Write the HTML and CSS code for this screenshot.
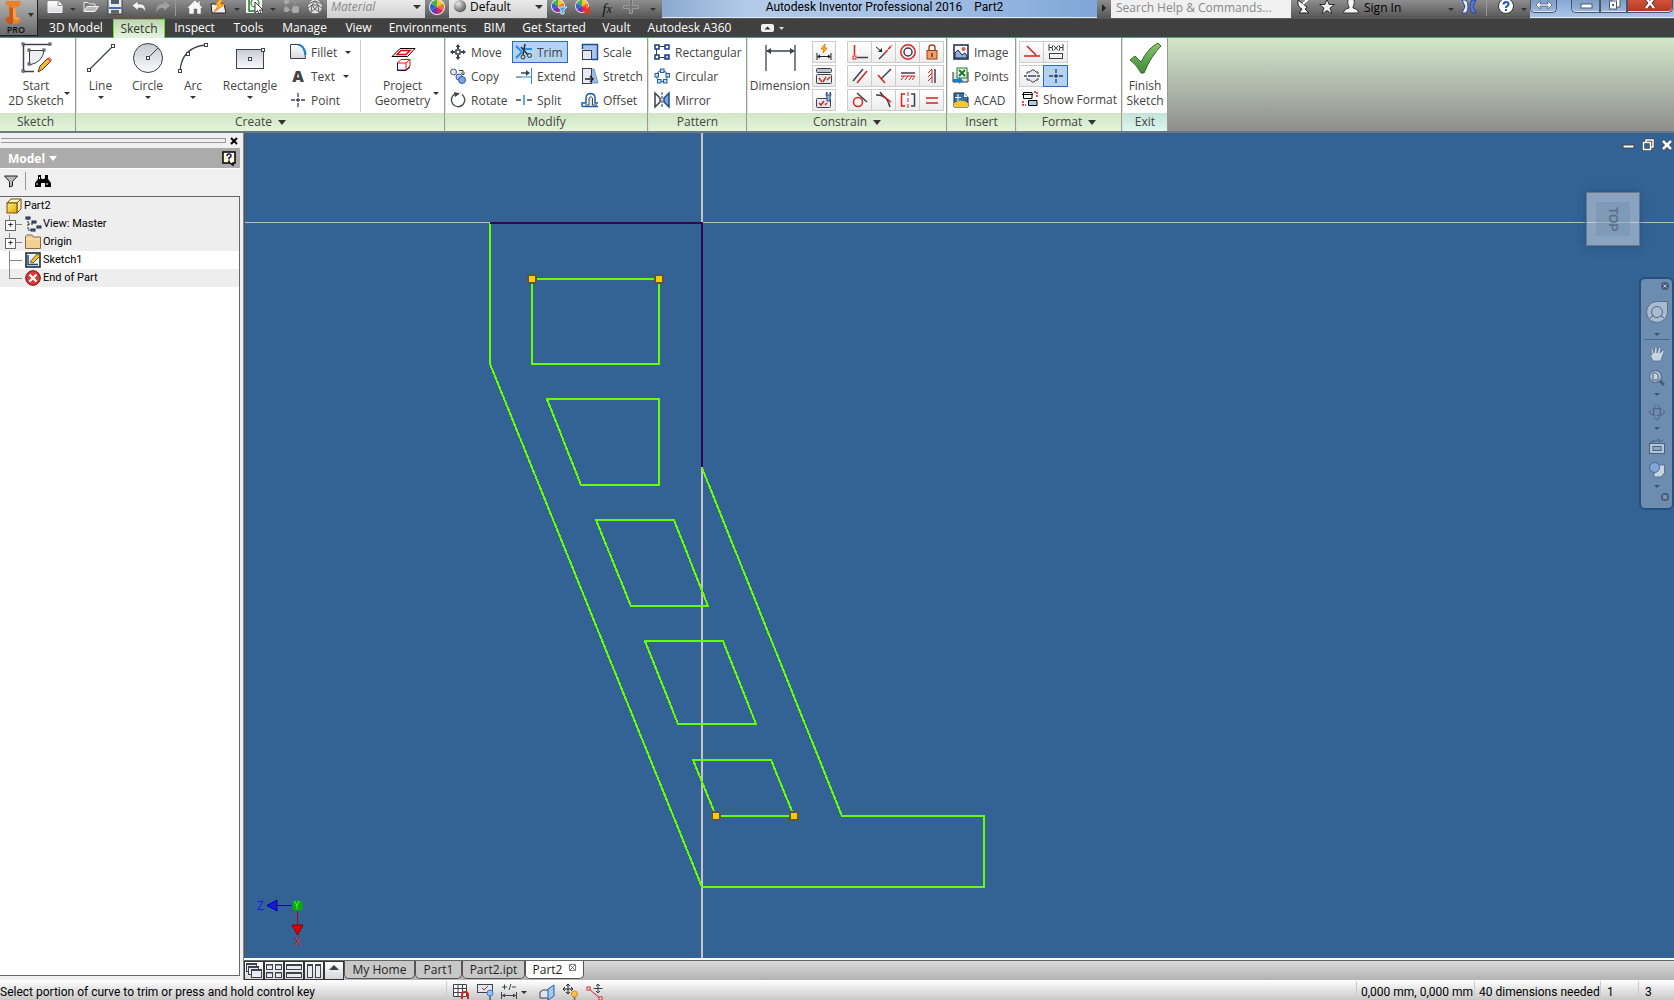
FILE: index.html
```html
<!DOCTYPE html>
<html lang="en">
<head>
<meta charset="utf-8">
<title>Autodesk Inventor Professional 2016 - Part2</title>
<link rel="stylesheet" href="styles.css">
</head>
<body>
<svg class="defs" aria-hidden="true">
  <defs>
    <linearGradient id="steel" x1="0" y1="0" x2="0" y2="1"><stop offset="0" stop-color="#c6cad2"/><stop offset="1" stop-color="#fbfbfc"/></linearGradient>
    <linearGradient id="paper" x1="0" y1="0" x2="0" y2="1"><stop offset="0" stop-color="#ffffff"/><stop offset="1" stop-color="#d4d8de"/></linearGradient>
    <linearGradient id="leaf" x1="0" y1="0" x2="0" y2="1"><stop offset="0" stop-color="#8fc46e"/><stop offset="1" stop-color="#3d8a35"/></linearGradient>
    <linearGradient id="gold" x1="0" y1="0" x2="1" y2="1"><stop offset="0" stop-color="#fff27a"/><stop offset="1" stop-color="#e0a800"/></linearGradient>
    <radialGradient id="ball" cx=".35" cy=".3" r=".8"><stop offset="0" stop-color="#e8e8e8"/><stop offset="1" stop-color="#4c4c4c"/></radialGradient>
    <symbol id="wheel" viewBox="0 0 16 16">
      <circle cx="8" cy="8" r="8" fill="#e9e9ee"/>
      <path d="M8 8V1A7 7 0 0 1 14 4.500Z" fill="#f6c62a"/><path d="M8 8L14 4.500A7 7 0 0 1 14 11.500Z" fill="#f0702a"/>
      <path d="M8 8L14 11.500A7 7 0 0 1 8 15Z" fill="#d8285a"/><path d="M8 8V15A7 7 0 0 1 2 11.500Z" fill="#6a35b8"/>
      <path d="M8 8L2 11.500A7 7 0 0 1 2 4.500Z" fill="#2a62d8"/><path d="M8 8L2 4.500A7 7 0 0 1 8 1Z" fill="#46b048"/>
    </symbol>
  </defs>
</svg>

<header class="titlebar">
  <button class="tool" aria-label="New"><svg viewBox="0 0 16 16"><path d="M1 2.500H11.500L15 6V13.500H1Z" fill="url(#paper)" stroke="#f4f4f4"/><path d="M11 2.500V6.500H15" fill="none" stroke="#888"/></svg></button>
  <button class="drop" aria-label="New options"></button>
  <button class="tool" aria-label="Open"><svg viewBox="0 0 16 16"><path d="M1 12V3.500H5L6.500 5H12V7" fill="#777" stroke="#e8e8e8"/><path d="M1 12.500L4 7.500H15.500L12 12.500Z" fill="#bbb" stroke="#f4f4f4"/></svg></button>
  <button class="tool" aria-label="Save"><svg viewBox="0 0 16 16"><rect x="1" y="0" width="14" height="15" fill="#e6e9ee" stroke="#3b3f47"/><rect x="4" y="0" width="8" height="5" fill="#555b66"/><rect x="2" y="8" width="12" height="2" fill="#3b6db0"/><rect x="4" y="11" width="8" height="4" fill="#666"/></svg></button>
  <button class="tool" aria-label="Undo"><svg viewBox="0 0 16 16"><path d="M1 6.500L7 2V5H10Q15 5.500 14.500 14Q13 9 10 9H7V11.500Z" fill="#f2f2f2" stroke="#555" stroke-width=".5"/></svg></button>
  <button class="tool" aria-label="Redo"><svg viewBox="0 0 16 16"><path d="M15 6.500L9 2V5H6Q1 5.500 1.500 14Q3 9 6 9H9V11.500Z" fill="#a0a0a0"/></svg></button>
  <span class="rule"></span>
  <button class="tool" aria-label="Home"><svg viewBox="0 0 16 16"><path d="M8 1L0 9H2V15H7V10H10V15H14V9H16L13 6V2H11V4Z" fill="#f6f6f6" stroke="#666" stroke-width=".5"/></svg></button>
  <button class="tool" aria-label="Update"><svg viewBox="0 0 16 16"><path d="M0 5H13L15 14H1Z" fill="#eee" stroke="#222"/><path d="M11 -2L4 6H8L3 13L14 5H9L13 -2Z" fill="#ffc93c" stroke="#e8760c"/></svg></button>
  <button class="drop" aria-label="Update options"></button>
  <button class="tool" aria-label="Select"><svg viewBox="0 0 16 16"><path d="M-1 -1H15V14H-1Z" fill="#f4f8f4"/><path d="M2 1V12H13" fill="none" stroke="#177e23" stroke-width="1.500"/><circle cx="8" cy="4" r="4" fill="none" stroke="#5c9c5c" stroke-width="1.500"/><path d="M8 3V14L10.500 11.500L12 15L14 14L12.500 11H16Z" fill="#fff" stroke="#333"/></svg></button>
  <button class="drop" aria-label="Select options"></button>
  <button class="tool" aria-label="Relationships"><svg viewBox="0 0 16 16" fill="#aaa"><rect x="1" y="0" width="5" height="5" rx="2"/><rect x="1" y="8" width="5" height="5" rx="2"/><rect x="9" y="7" width="7" height="7" rx="2"/><path d="M7 2H12V6M3 6V8M6 11H9" fill="none" stroke="#999"/></svg></button>
  <button class="tool" aria-label="Adjust material"><svg viewBox="0 0 16 16"><circle cx="8" cy="7.500" r="7.500" fill="#ddd" stroke="#666"/><path d="M1 5L8 2L15 5M1 9L5 6L11 6L15 9M4 13L5 6L8 2L11 6L12 13L8 10ZM5 6L8 10L11 6" fill="none" stroke="#666"/></svg></button>
  <span class="pick material"><select aria-label="Material"><option>Material</option></select></span>
  <button class="tool" aria-label="Appearance"><svg viewBox="0 0 16 16"><use href="#wheel"/></svg></button>
  <span class="pick look"><svg viewBox="0 0 16 16"><circle cx="8" cy="7" r="7" fill="url(#ball)"/></svg><select aria-label="Appearance style"><option>Default</option></select></span>
  <button class="tool" aria-label="Adjust appearance"><svg viewBox="0 0 16 16"><use href="#wheel" width="14" height="14"/><path d="M7 8H16L13 11V15H10V11Z" fill="#35b6e6" stroke="#fff" stroke-width=".7"/></svg></button>
  <button class="tool" aria-label="Clear appearance"><svg viewBox="0 0 16 16"><use href="#wheel" width="14" height="14"/><path d="M9 8L15 15M15 8L9 15" stroke="#e8361e" stroke-width="2"/></svg></button>
  <button class="tool fx" aria-label="Parameters">f<span>x</span></button>
  <button class="tool" aria-label="Add"><svg viewBox="0 0 16 16"><path d="M6.500 .5H9.500V6.500H15.500V9.500H9.500V14.500H6.500V9.500H.5V6.500H6.500Z" fill="#777" stroke="#999"/></svg></button>
  <button class="drop wide" aria-label="Customize toolbar"></button>
  <h1 class="caption"><span>Autodesk Inventor Professional 2016</span><span>Part2</span></h1>
  <button class="expand" aria-label="Collapse search"></button>
  <input class="search" type="text" aria-label="Search" placeholder="Search Help &amp; Commands...">
  <button class="tool" aria-label="Communication center"><svg viewBox="0 0 16 16"><path d="M3 1Q2 8 7 10L4 14H14L10 10Q12 9 12 8Z" fill="#f4f4f4" stroke="#222"/><path d="M8 5L13 0" stroke="#fff" stroke-width="2"/></svg></button>
  <button class="tool" aria-label="Favorites"><svg viewBox="0 0 16 16"><path d="M8 0L10 5.500H15.500L11 9L13 15L8 11.500L3 15L5 9L.5 5.500H6Z" fill="#f4f4f4" stroke="#333"/></svg></button>
  <button class="tool" aria-label="Account"><svg viewBox="0 0 16 16"><path d="M8 -1C4 -1 4 4 6 8V9Q1 10 .5 14H15.500Q15 10 10 9V8C12 4 12 -1 8 -1Z" fill="#f4f4f4" stroke="#333"/></svg></button>
  <button class="signin">Sign In</button>
  <button class="drop" aria-label="Sign in options"></button>
  <button class="tool" aria-label="Exchange apps"><svg viewBox="0 0 16 16"><path d="M1 1H5Q7 3 7 7.500Q7 12 5 14H1L4 7.500Z" fill="#e8ecfa" stroke="#29449c"/><path d="M15 1H11Q9 3 9 7.500Q9 12 11 14H15L12 7.500Z" fill="#5679d6" stroke="#29449c"/></svg></button>
  <span class="rule far"></span>
  <button class="tool" aria-label="Help"><svg viewBox="0 0 16 16"><circle cx="8" cy="7" r="7.500" fill="#fff" stroke="#333"/><path d="M5.500 5.500Q5.500 3 8 3Q10.500 3 10.500 5.200Q10.500 6.600 8 8V9" fill="none" stroke="#1f56c0" stroke-width="2"/><rect x="7" y="10" width="2" height="2" fill="#1f56c0"/></svg></button>
  <button class="drop" aria-label="Help options"></button>
  <div class="winbar">
    <button class="win resize" aria-label="Resize"><svg viewBox="0 0 18 12"><path d="M1 5L5 1V4H13V1L17 5L13 9V6H5V9Z" fill="#fff" stroke="#4c5a70" stroke-width=".7"/></svg></button>
    <button class="win min" aria-label="Minimize"><svg viewBox="0 0 18 12"><rect x="4" y="4" width="11" height="4" fill="#fff" stroke="#4c5a70"/></svg></button>
    <button class="win max" aria-label="Restore"><svg viewBox="0 0 18 12"><rect x="7" y="-2" width="8" height="9" fill="#fff" stroke="#4c5a70"/><rect x="4.500" y="1" width="7" height="8" fill="#fff" stroke="#4c5a70"/><rect x="7" y="4" width="2" height="2" fill="#4c5a70"/></svg></button>
    <button class="win close" aria-label="Close"><svg viewBox="0 0 18 12"><path d="M5 -2L13 8M13 -2L5 8" stroke="#4a2020" stroke-width="4"/><path d="M5 -2L13 8M13 -2L5 8" stroke="#fff" stroke-width="2.500"/></svg></button>
  </div>
</header>

<button class="appmenu" aria-label="Application menu">
  <svg viewBox="0 0 26 26"><path d="M5 0H21V5L16 7V17L21 19V23L16 25H9L5 22V18L9 17V6L5 4Z" fill="#e8812a"/><path d="M9 6L13 8V25H9L5 22V18L9 17Z" fill="#c4591a"/><path d="M13 8L16 7V17L21 19L16 21L13 18Z" fill="#f6a04a"/></svg>
  <span>PRO</span>
</button>

<nav class="tabs">
  <a href="#model">3D Model</a><a href="#sketch" class="on">Sketch</a><a href="#inspect">Inspect</a><a href="#tools">Tools</a><a href="#manage">Manage</a><a href="#view">View</a><a href="#env">Environments</a><a href="#bim">BIM</a><a href="#start">Get Started</a><a href="#vault">Vault</a><a href="#a360">Autodesk A360</a>
  <button class="fold" aria-label="Minimize ribbon"><svg viewBox="0 0 26 8"><rect width="13" height="8" rx="2" fill="#f0f0f0"/><path d="M3.500 5.500L6.500 2.500L9.500 5.500Z" fill="#333"/><path d="M18 3H23L20.500 6Z" fill="#ddd"/></svg></button>
</nav>

<section class="ribbon">
  <div class="panel p-sketch">
    <div class="body">
      <button class="big side"><svg viewBox="0 0 32 32"><g fill="none" stroke="#3c424c"><path d="M3.500 30.500V2.500H30.500M3.500 29.500H14" stroke-width="1.500"/><path d="M9.500 8.500H24Q23 20 9.500 23Z" fill="#eceef2"/></g><g fill="#fff" stroke="#3c424c"><rect x="2" y="1" width="2" height="2"/><rect x="29" y="1" width="2" height="2"/><rect x="2" y="28" width="2" height="2"/><rect x="8" y="7" width="2" height="2"/><rect x="23" y="7" width="2" height="2"/><rect x="8" y="21" width="2" height="2"/></g><path d="M18 30L20 24L28 16L31 19L23 27Z" fill="#f4b63c" stroke="#5a3a10"/><path d="M27 17L29 15L32 18L30 20Z" fill="#e0604c"/></svg><span>Start<br>2D Sketch</span></button>
    </div>
    <h2>Sketch</h2>
  </div>

  <div class="panel p-create">
    <div class="body">
      <button class="big"><svg viewBox="0 0 32 32"><path d="M4 28L28 4" stroke="#3c424c" stroke-width="1.300"/><g fill="#fff" stroke="#3c424c"><rect x="2.500" y="26.500" width="3" height="3"/><rect x="26.500" y="2.500" width="3" height="3"/></g></svg><span>Line</span></button>
      <button class="big"><svg viewBox="0 0 32 32"><circle cx="16" cy="16" r="14.500" fill="url(#steel)" stroke="#3c424c"/><path d="M16 16L26 6" stroke="#3c424c"/><rect x="14.500" y="14.500" width="3" height="3" fill="#fff" stroke="#3c424c"/></svg><span>Circle</span></button>
      <button class="big"><svg viewBox="0 0 32 32"><path d="M3 29Q5 5 29 3" fill="none" stroke="#3c424c" stroke-width="1.300"/><g fill="#fff" stroke="#3c424c"><rect x="1.500" y="27.500" width="3" height="3"/><rect x="9.500" y="10.500" width="3" height="3"/><rect x="27.500" y="1.500" width="3" height="3"/></g></svg><span>Arc</span></button>
      <button class="big"><svg viewBox="0 0 32 32"><rect x="2.500" y="7.500" width="27" height="19" fill="url(#steel)" stroke="#3c424c"/><g fill="#fff" stroke="#3c424c"><rect x="14.500" y="15.500" width="3" height="3"/><rect x="27.500" y="6.500" width="3" height="3"/></g></svg><span>Rectangle</span></button>
      <div class="stack">
        <button class="small more"><svg viewBox="0 0 16 16"><path d="M.5 .5H8Q15 2 15.500 14.500H.5Z" fill="url(#paper)" stroke="#3c424c"/><path d="M8 .5Q15 2 15.500 11" fill="none" stroke="#1a7fd8" stroke-width="2"/></svg>Fillet</button>
        <button class="small more"><b class="glyph">A</b>Text</button>
        <button class="small"><svg viewBox="0 0 16 16"><path d="M1 8H5M6 8H10M11 8H15M8 1V5M8 6V10M8 11V15" stroke="#3c424c" stroke-width="1.300"/></svg>Point</button>
      </div>
      <button class="big side split"><svg viewBox="0 0 32 32"><path d="M13 6.500H28L20.500 14.500H5Z" fill="#fdf3ee" stroke="#000"/><path d="M14 8.500H23L19 12.500H10Z" fill="none" stroke="#e01010" stroke-width="1.500"/><path d="M10.500 21H19V28H10.500ZM10.500 21L14 17.500H23L19 21M23 17.500V24L19 28" fill="#fff" stroke="#e01010"/><path d="M10.500 21V28.500H19L23 25" fill="none" stroke="#101060"/></svg><span>Project<br>Geometry</span></button>
    </div>
    <h2 class="more">Create</h2>
  </div>

  <div class="panel p-modify">
    <div class="body">
      <div class="stack">
        <button class="small"><svg viewBox="0 0 16 16"><rect x="6" y="6" width="4" height="4" fill="none" stroke="#3c424c" stroke-width="1.500"/><path d="M8 0L10.500 3H9V5H7V3H5.500ZM8 16L5.500 13H7V11H9V13H10.500ZM0 8L3 5.500V7H5V9H3V10.500ZM16 8L13 10.500V9H11V7H13V5.500Z" fill="#3c424c"/></svg>Move</button>
        <button class="small"><svg viewBox="0 0 16 16"><circle cx="3.500" cy="4" r="3" fill="#dfe6f2" stroke="#4a5a78"/><circle cx="9" cy="9" r="3" fill="#b6cdf0" stroke="#2c5aa8"/><circle cx="12" cy="12" r="3.500" fill="#7ba4e4" stroke="#2c5aa8"/><path d="M9 2.500H13V5.500M11 4.500L13 7L15 4.500" fill="none" stroke="#333"/></svg>Copy</button>
        <button class="small"><svg viewBox="0 0 16 16"><path d="M12 2.500A6.700 6.700 0 1 1 5 2" fill="none" stroke="#4c525c" stroke-width="1.500"/><path d="M4 0L10 1.500L5 5Z" fill="#3c424c"/></svg>Rotate</button>
      </div>
      <div class="stack">
        <button class="small on"><svg viewBox="0 0 16 16"><path d="M0 2L6 8M0 14L6 8M8 5H16" stroke="#2090e8" stroke-width="2"/><path d="M5 3L12 11M9 0L7 11" stroke="#2c323c" stroke-width="1.500"/><circle cx="7" cy="13" r="2" fill="none" stroke="#2c323c"/><circle cx="13.500" cy="11.500" r="2" fill="none" stroke="#2c323c"/></svg>Trim</button>
        <button class="small"><svg viewBox="0 0 16 16"><path d="M0 9H5" stroke="#3c424c"/><path d="M5 9H15" stroke="#2090e8"/><path d="M15.500 0V16" stroke="#2090e8"/><path d="M5 5H12" stroke="#3c424c" stroke-width="1.500"/><path d="M10 2L14 5L10 8Z" fill="#3c424c"/></svg>Extend</button>
        <button class="small"><svg viewBox="0 0 16 16"><path d="M0 8H5M11 8H16" stroke="#3c424c" stroke-width="1.500"/><path d="M8 3V13" stroke="#2090e8" stroke-width="1.500"/></svg>Split</button>
      </div>
      <div class="stack">
        <button class="small"><svg viewBox="0 0 16 16"><path d="M.5 5V.5H15.500V15.500H10" fill="#a9c4ee" stroke="#1d4c8f" stroke-width="1.500"/><rect x=".5" y="6.500" width="9" height="9" fill="#e6eaf0" stroke="#3c424c"/></svg>Scale</button>
        <button class="small"><svg viewBox="0 0 16 16"><path d="M8 1H12L16 15H9Z" fill="#9dbbe8" stroke="#4c78b8" stroke-width=".7"/><rect x=".5" y=".5" width="9" height="15" fill="#e6eaf0" stroke="#3c424c"/><path d="M3 11H9M8 8L11 11L8 14" fill="none" stroke="#222" stroke-width="1.500"/></svg>Stretch</button>
        <button class="small"><svg viewBox="0 0 16 16"><path d="M0 14.500H16M0 14.500V11H4V6Q4 1.500 9 1.500Q13 2 13 6V11H16" fill="none" stroke="#1d5ea8" stroke-width="1.500"/><path d="M3 13H7V6Q9 3 10.500 6V13H15" fill="#dfe8f4" stroke="#3c424c"/></svg>Offset</button>
      </div>
    </div>
    <h2>Modify</h2>
  </div>

  <div class="panel p-pattern">
    <div class="body">
      <div class="stack">
        <button class="small"><svg viewBox="0 0 16 16"><path d="M2.500 5V11M5 2.500H11M5 13.500H11" stroke="#3c424c"/><g fill="#fff" stroke="#173a80" stroke-width="1.500"><rect x="1" y="1" width="4" height="4"/><rect x="11" y="1" width="4" height="4"/><rect x="1" y="11" width="4" height="4"/><rect x="11" y="11" width="4" height="4" fill="#a9c4ee"/></g></svg>Rectangular</button>
        <button class="small"><svg viewBox="0 0 16 16"><circle cx="8" cy="8" r="5.500" fill="none" stroke="#3c424c"/><g fill="#c4dcf4" stroke="#1d5ea8"><rect x="6.500" y="1" width="3.500" height="3.500"/><rect x="1" y="5.500" width="3.500" height="3.500"/><rect x="12" y="5.500" width="3.500" height="3.500"/><rect x="3.500" y="11.500" width="3.500" height="3.500"/><rect x="9.500" y="11.500" width="3.500" height="3.500"/></g></svg>Circular</button>
        <button class="small"><svg viewBox="0 0 16 16"><path d="M1 1V15L6 10V6Z" fill="#fff" stroke="#3c424c" stroke-width="1.500"/><path d="M15 1V15L10 10V6Z" fill="#7ba4e4" stroke="#1d4c8f" stroke-width="1.500"/><path d="M8 0V16" stroke="#333" stroke-dasharray="3 1"/></svg>Mirror</button>
      </div>
    </div>
    <h2>Pattern</h2>
  </div>

  <div class="panel p-constrain">
    <div class="body">
      <button class="big plain"><svg viewBox="0 0 32 32"><path d="M2 3V29M31 3V29M3 9H30" stroke="#3c424c" stroke-width="1.300"/><path d="M2 9L7 6V12ZM31 9L26 6V12Z" fill="#3c424c"/></svg><span>Dimension</span></button>
      <div class="cells one">
        <button aria-label="Automatic dimensions"><svg viewBox="0 0 16 16"><path d="M1 9V16M15 9V16M2 12.500H14" stroke="#222"/><path d="M1 12.500L4 10.500V14.500ZM15 12.500L12 10.500V14.500Z" fill="#222"/><path d="M9 0L5 5H8L7 9L11 4H8.500Z" fill="#ffc020" stroke="#e07a10"/></svg></button>
        <button aria-label="Show constraints"><svg viewBox="0 0 16 16"><rect x=".5" y=".5" width="15" height="4" rx="1" fill="#b8c2d0" stroke="#3c424c"/><rect x=".5" y="6.500" width="15" height="9" rx="1" fill="#e4e8ee" stroke="#3c424c"/><path d="M3 10L6 14M7 14L10 9M11 12L14 9" stroke="#c8381e" stroke-width="1.500"/></svg></button>
        <button aria-label="Constraint settings"><svg viewBox="0 0 16 16"><rect x=".5" y="6.500" width="14" height="9" rx="1" fill="#e4e8ee" stroke="#3c424c"/><path d="M3 11L5 13L8 9M9 13L11 11" fill="none" stroke="#d82020" stroke-width="1.500"/><path d="M11 9V5Q9 3 11 0V3H14V0Q16 3 14 5V9Z" fill="#9cc0e8" stroke="#284a78"/></svg></button>
      </div>
      <div class="cells four">
        <button aria-label="Coincident"><svg viewBox="0 0 16 16"><path d="M2.500 1V11" stroke="#d82020" stroke-width="1.500"/><rect x="1" y="12" width="3" height="3" fill="#fff" stroke="#d82020"/><path d="M5 13.500H16" stroke="#3c424c" stroke-width="1.500"/></svg></button>
        <button aria-label="Collinear"><svg viewBox="0 0 16 16"><path d="M3 15L9 9" stroke="#3c424c" stroke-width="1.500"/><path d="M9 9L16 1" stroke="#d82020" stroke-width="1.500" stroke-dasharray="4 1"/><path d="M0 3L5 7" stroke="#222"/><path d="M6 8V4L2 8Z" fill="#222"/></svg></button>
        <button aria-label="Concentric"><svg viewBox="0 0 16 16" fill="none" stroke-width="1.500"><circle cx="8" cy="8" r="7.200" stroke="#d82020"/><circle cx="8" cy="8" r="4" stroke="#3c424c"/></svg></button>
        <button aria-label="Fix"><svg viewBox="0 0 16 16"><path d="M5 7V3.500Q5 1 8 1Q11 1 11 3.500V7" fill="none" stroke="#a84a1c" stroke-width="1.500"/><rect x="3" y="6.500" width="10" height="8.500" fill="#f0a070" stroke="#9c4016"/><path d="M8 9V13" stroke="#7c2c0c" stroke-width="1.500"/></svg></button>
        <button aria-label="Parallel"><svg viewBox="0 0 16 16"><path d="M1 13L11 1" stroke="#3c424c" stroke-width="1.500"/><path d="M5 15L15 3" stroke="#d82020" stroke-width="1.500"/></svg></button>
        <button aria-label="Perpendicular"><svg viewBox="0 0 16 16"><path d="M5 11L15 1" stroke="#3c424c" stroke-width="1.500"/><path d="M2 7L9 15" stroke="#d82020" stroke-width="1.500"/></svg></button>
        <button aria-label="Horizontal"><svg viewBox="0 0 16 16"><path d="M1 5H15" stroke="#3c424c" stroke-width="1.500"/><path d="M1 8H15M4 8L1 12M8 8L5 12M12 8L9 12M15 8L12 12" stroke="#d82020"/></svg></button>
        <button aria-label="Vertical"><svg viewBox="0 0 16 16"><path d="M11 1V15" stroke="#3c424c" stroke-width="1.500"/><path d="M8 1V15M8 1L4 5M8 5L4 9M8 9L4 13" stroke="#d82020"/></svg></button>
        <button aria-label="Tangent"><svg viewBox="0 0 16 16"><circle cx="6" cy="10" r="4.500" fill="none" stroke="#d82020" stroke-width="1.500"/><path d="M5 1L15 10" stroke="#3c424c" stroke-width="1.500"/></svg></button>
        <button aria-label="Smooth"><svg viewBox="0 0 16 16"><path d="M0 3Q11 2 14 15M4 0L8 5" fill="none" stroke="#3c424c" stroke-width="1.500"/><path d="M6 3L15 10" fill="none" stroke="#d82020" stroke-width="1.500"/></svg></button>
        <button aria-label="Symmetric"><svg viewBox="0 0 16 16" fill="none"><path d="M5 2H1.500V14H5" stroke="#d82020" stroke-width="1.500"/><path d="M8 0V16" stroke="#d82020" stroke-dasharray="4 2"/><path d="M11 2H14.500V14H11" stroke="#3c424c" stroke-width="1.500"/></svg></button>
        <button aria-label="Equal"><svg viewBox="0 0 16 16"><path d="M2 6H14M2 11H14" stroke="#d82020" stroke-width="1.500"/></svg></button>
      </div>
    </div>
    <h2 class="more">Constrain</h2>
  </div>

  <div class="panel p-insert">
    <div class="body">
      <div class="stack">
        <button class="small"><svg viewBox="0 0 16 16"><rect x="1" y="1" width="14" height="14" fill="#f2f6fc" stroke="#182848" stroke-width="1.500"/><circle cx="10.500" cy="5" r="2" fill="#e0603c"/><path d="M2 9L5 6L9 11L12 9L14 12V14H2Z" fill="#8fb0d8" stroke="#182848"/></svg>Image</button>
        <button class="small"><svg viewBox="0 0 16 16"><path d="M0 4V14H15V4" fill="#dfe4ea" stroke="#333"/><rect x="4" y="0" width="10" height="10" fill="#eef7ea" stroke="#1e7a2a"/><path d="M6 2L12 8M12 2L6 8" stroke="#1e7a2a" stroke-width="2"/><path d="M0 11H6V9L10 12.500L6 16V14H0Z" fill="#1a78d0"/></svg>Points</button>
        <button class="small"><svg viewBox="0 0 16 16"><path d="M1 1H11L15 5V15H1Z" fill="#356fa8" stroke="#222"/><path d="M1 11Q8 6 15 11V15H1Z" fill="#f4c82c"/><path d="M5 2V9M2 5.500H8" stroke="#fff"/><path d="M11 1V5H15" fill="#fff"/></svg>ACAD</button>
      </div>
    </div>
    <h2>Insert</h2>
  </div>

  <div class="panel p-format">
    <div class="body">
      <div class="cells two">
        <button aria-label="Construction"><svg viewBox="0 0 16 16"><path d="M0 12H16M3 2L12 11" stroke="#d82020" stroke-width="1.500"/></svg></button>
        <button aria-label="Driven dimension"><svg viewBox="0 0 16 16" fill="none" stroke="#3c424c"><path d="M1 0V7M15 0V7M1 3.500H4M12 3.500H15M6 2L10 6M10 2L6 6M5 1Q3 4 5 7M11 1Q13 4 11 7"/><rect x="1.500" y="9.500" width="13" height="5"/></svg></button>
        <button aria-label="Centerline"><svg viewBox="0 0 16 16"><path d="M3 6V4H6L8 2H10L12 4H14V6M3 10V12H6L8 14H10L12 12H14V10" fill="#e4e8ee" stroke="#3c424c"/><path d="M0 8H3M4 8H12M13 8H16" stroke="#3c424c" stroke-width="1.500"/></svg></button>
        <button class="on" aria-label="Center point"><svg viewBox="0 0 16 16"><path d="M1 8H5M6 8H10M11 8H15M8 1V5M8 6V10M8 11V15" stroke="#2c3e5c" stroke-width="1.300"/></svg></button>
      </div>
      <button class="small"><svg viewBox="0 0 16 16"><path d="M1.500 1.500H10V7.500H1.500ZM0 3.500H11" fill="#fff" stroke="#000"/><path d="M6.500 9.500H15V14.500H6.500Z" fill="#b8c8e0" stroke="#000"/><path d="M12 1H15V6M1 10V14H4" fill="none" stroke="#e01010" stroke-width="1.500" stroke-dasharray="2 1"/></svg>Show Format</button>
    </div>
    <h2 class="more">Format</h2>
  </div>

  <div class="panel p-exit">
    <div class="body">
      <button class="big plain"><svg viewBox="0 0 32 32"><path d="M1 18L6 14L12 20Q19 6 29 1L32 4Q22 14 15 31H12Q8 23 1 18Z" fill="url(#leaf)" stroke="#2e6b2c"/></svg><span>Finish<br>Sketch</span></button>
    </div>
    <h2>Exit</h2>
  </div>
</section>

<main class="work">
  <aside class="browser">
    <div class="grip"><span></span><button aria-label="Close panel"><svg viewBox="0 0 8 8"><path d="M1 1L7 7M7 1L1 7" stroke="#000" stroke-width="2"/></svg></button></div>
    <div class="head"><button class="title">Model</button><button class="helpbox" aria-label="Help"><svg viewBox="0 0 14 15"><path d="M1 1H13V12H11V14L8 12H1Z" fill="#ffffd0" stroke="#000" stroke-width="1.500"/><path d="M5 5Q5 3 7 3Q9 3 9 5Q9 6 7 7V8.500" fill="none" stroke="#10108c" stroke-width="1.500"/><rect x="6" y="9.500" width="2" height="1.500" fill="#10108c"/></svg></button></div>
    <div class="tools">
      <button aria-label="Filter"><svg viewBox="0 0 16 16"><path d="M1.500 3H14.500L9.500 8.500V13L6.500 14V8.500Z" fill="#bbb" stroke="#222"/></svg></button>
      <span></span>
      <button aria-label="Find"><svg viewBox="0 0 16 16"><path d="M3 2H6V5L7 6H9L10 5V2H13V6L16 10V14H10V10H6V14H0V10L3 6Z" fill="#000"/><path d="M2 10V12M12 10V12M4.500 4V6" stroke="#fff"/></svg></button>
    </div>
    <ul class="tree">
      <li class="root"><svg viewBox="0 0 16 16"><path d="M1 5L5 1H15L11 5ZM15 1V11L11 15V5" fill="#fff6c0" stroke="#7a4a10"/><rect x="1" y="5" width="10" height="10" fill="url(#gold)" stroke="#7a4a10"/></svg>Part2</li>
      <li class="plus"><svg viewBox="0 0 16 16"><path d="M3 2V14H8M3 8H8" fill="none" stroke="#222" stroke-dasharray="2 1"/><g fill="#3c78b8" stroke="#223"><rect x="1" y="1" width="4" height="2"/><rect x="7" y="5" width="4" height="2"/><rect x="12" y="10" width="4" height="2"/><rect x="6" y="13" width="4" height="2"/></g></svg>View: Master</li>
      <li class="plus"><svg viewBox="0 0 16 16"><path d="M.5 14.500V2.500L2 1H7L8.500 3H15.500V14.500Z" fill="#f2d094" stroke="#8a6a3c"/><path d="M1 5H15" stroke="#fbe6c0"/></svg>Origin</li>
      <li class="leaf pick"><svg viewBox="0 0 16 16"><rect x="1" y="1" width="14" height="14" fill="#e8f2fa" stroke="#122" stroke-width="1.500"/><path d="M3 3V12.500H13" fill="none" stroke="#234a78" stroke-width="1.500"/><path d="M5 10L12 2L15 4L8 11Z" fill="#f6c030" stroke="#7a5a10"/></svg>Sketch1</li>
      <li class="leaf last"><svg viewBox="0 0 16 16"><circle cx="8" cy="8" r="7.300" fill="#dc3a3a" stroke="#6a1010"/><path d="M4.500 4.500L11.500 11.500M11.500 4.500L4.500 11.500" stroke="#fff" stroke-width="2.200"/></svg>End of Part</li>
    </ul>
  </aside>

  <section class="stage">
    <div class="canvas">
      <svg class="drawing" role="img" aria-label="Sketch geometry">
        <path d="M458 0V825" stroke="#c4c4c4" stroke-width="2"/>
        <line x1="1" y1="89.500" x2="100%" y2="89.500" stroke="#c8c0b4"/>
        <g fill="none" stroke="#66ff00" stroke-width="2" shape-rendering="crispEdges">
          <path d="M246 89V231L458 754H740V683H598L458 335"/>
          <path d="M288 146H415V231H288Z"/>
          <path d="M303 266H415V352H337Z"/>
          <path d="M352 387H430L464 473H387Z"/>
          <path d="M401 508H479L512 591H434Z"/>
          <path d="M449 627H527L550 683H472Z"/>
        </g>
        <path d="M246 90H458V334" fill="none" stroke="#3a0048" stroke-width="2"/>
        <g fill="#ffc800" stroke="#555" stroke-width="2">
          <rect x="284" y="142" width="8" height="8"/><rect x="411" y="142" width="8" height="8"/>
          <rect x="468" y="679" width="8" height="8"/><rect x="546" y="679" width="8" height="8"/>
        </g>
        <g class="axis">
          <path d="M33 772.500H48" stroke="#0000c0"/><path d="M23 772.500L33 767V778Z" fill="#1818e0" stroke="#0000a0"/>
          <path d="M53.500 778V792" stroke="#c00000"/><path d="M48 792H59L53.500 802Z" fill="#d80000" stroke="#900000"/>
          <circle cx="53.500" cy="772.500" r="5.500" fill="#0aa80a"/>
          <text x="13" y="777" fill="#1818e0">Z</text><text x="50" y="776" class="up" fill="#5cf05c">Y</text><text x="50" y="813" fill="#e01818">X</text>
        </g>
      </svg>
      <div class="mdi">
        <button aria-label="Minimize document"><svg viewBox="0 0 14 14"><rect x="1" y="7" width="11" height="3" fill="#fff" stroke="#444"/></svg></button>
        <button aria-label="Restore document"><svg viewBox="0 0 14 14" fill="none"><path d="M5 4V2H12V9H10M2.500 4.500H9.500V11.500H2.500Z" stroke="#444" stroke-width="3"/><path d="M5 4V2H12V9H10M2.500 4.500H9.500V11.500H2.500Z" stroke="#fff" stroke-width="1.500"/></svg></button>
        <button aria-label="Close document"><svg viewBox="0 0 14 14"><path d="M3 3L11 11M11 3L3 11" stroke="#444" stroke-width="4"/><path d="M3 3L11 11M11 3L3 11" stroke="#fff" stroke-width="2.500"/></svg></button>
      </div>
      <button class="cube"><span>TOP</span></button>
      <div class="navbar">
        <button class="tiny" aria-label="Close navigation bar"><svg viewBox="0 0 8 8"><circle cx="4" cy="4" r="4" fill="#465d78"/><path d="M2.500 2.500L5.500 5.500M5.500 2.500L2.500 5.500" stroke="#b8cadc"/></svg></button>
        <button class="wheelbtn menu" aria-label="Steering wheel"><svg viewBox="0 0 22 22"><path d="M11 .5H21.500V11A10.500 10.500 0 1 1 11 .5Z" fill="#a8bcd0" stroke="#56708e"/><circle cx="11" cy="11" r="5.500" fill="#a8bcd0" stroke="#4e6886"/><path d="M4 17L7.500 14.500M18 17L14.500 14.500" stroke="#4e6886"/></svg></button>
        <hr>
        <button aria-label="Pan"><svg viewBox="0 0 16 16"><path d="M4 15L1 9Q0 7 3 9L2 3Q3 1 4 3L5 7L6 1Q7 0 8 1V7L10 1Q11 0 12 2L11 7L14 4Q16 4 15 6L12 14V15Z" fill="#c8d4e0" stroke="#56708e" stroke-width=".8"/></svg></button>
        <button class="menu" aria-label="Zoom"><svg viewBox="0 0 16 16"><path d="M10 10L15 15" stroke="#4a5c72" stroke-width="3"/><circle cx="6.500" cy="6.500" r="6" fill="#a8bcd0" stroke="#4a627e"/><path d="M4 3H7L9 5V10H4Z" fill="#c8d4e0" stroke="#4a627e"/></svg></button>
        <button class="menu" aria-label="Orbit"><svg viewBox="0 0 16 16" fill="none" stroke="#4a627e"><ellipse cx="8" cy="8" rx="7.500" ry="3.500" stroke-dasharray="9 2"/><ellipse cx="8" cy="8" rx="3.500" ry="7.500" stroke-dasharray="12 2"/></svg></button>
        <button aria-label="Look at"><svg viewBox="0 0 16 16"><path d="M1 5L5 2V4L10 1V4L14 2" fill="none" stroke="#4a627e"/><rect x=".5" y="5.500" width="15" height="10" fill="#b4c4d6" stroke="#4a627e"/><rect x="4" y="8.500" width="8" height="4" fill="#8ea6c0" stroke="#4a627e"/></svg></button>
        <button class="menu" aria-label="Visual style"><svg viewBox="0 0 16 16"><path d="M5 6L8 3H15.500V11L12 15H5Z" fill="#c8d4e0" stroke="#56708e"/><circle cx="5.500" cy="5.500" r="5" fill="#84a6d4" stroke="#3e64a8"/></svg></button>
        <button class="tiny" aria-label="Customize"><svg viewBox="0 0 8 8"><circle cx="4" cy="4" r="4" fill="#465d78"/><path d="M2 3H6M2 5H6" stroke="#b8cadc"/></svg></button>
      </div>
    </div>
    <div class="docbar">
      <button class="lay" aria-label="Cascade"><svg viewBox="0 0 16 16"><g fill="#e8eaee" stroke="#3c424c"><rect x=".5" y="1.500" width="10" height="8"/><rect x="2.500" y="4.500" width="10" height="8"/><rect x="5.500" y="7.500" width="10" height="8"/></g><path d="M1 2H10M3 5H12M6 8H15" stroke="#3c424c" stroke-width="2"/></svg></button>
      <button class="lay" aria-label="Tile"><svg viewBox="0 0 16 16"><g fill="#e8eaee" stroke="#3c424c"><rect x=".5" y="2.500" width="6" height="5"/><rect x="9.500" y="2.500" width="6" height="5"/><rect x=".5" y="10.500" width="6" height="5"/><rect x="9.500" y="10.500" width="6" height="5"/></g><path d="M1 3H7M9 3H15M1 11H7M9 11H15" stroke="#3c424c"/></svg></button>
      <button class="lay" aria-label="Tile horizontally"><svg viewBox="0 0 16 16"><g fill="#e8eaee" stroke="#3c424c"><rect x=".5" y="2.500" width="15" height="5"/><rect x=".5" y="10.500" width="15" height="5"/></g><path d="M1 3H15M1 11H15" stroke="#3c424c" stroke-width="2"/></svg></button>
      <button class="lay" aria-label="Tile vertically"><svg viewBox="0 0 16 16"><g fill="#e8eaee" stroke="#3c424c"><rect x="1.500" y="2.500" width="5" height="13"/><rect x="9.500" y="2.500" width="5" height="13"/></g><path d="M1 3H7M9 3H15" stroke="#3c424c" stroke-width="2"/></svg></button>
      <button class="lay" aria-label="Tab list"><svg viewBox="0 0 16 16"><path d="M3 8L8 3L13 8Z" fill="#3c424c"/></svg></button>
      <a class="d1" href="#home">My Home</a><a class="d2" href="#part1">Part1</a><a class="d3" href="#part2ipt">Part2.ipt</a><a class="d4 on" href="#part2">Part2<svg viewBox="0 0 8 8"><path d="M1 1L7 7M7 1L1 7M.5 .5H7.500V7.500H.5Z" fill="none" stroke="#666"/></svg></a>
    </div>
  </section>
</main>

<footer class="status">
  <p class="prompt">Select portion of curve to trim or press and hold control key</p>
  <div class="aids">
    <button aria-label="Snap to grid"><svg viewBox="0 0 16 16"><path d="M.5 .5H13.500V12.500H.5ZM.5 4.500H13.500M.5 8.500H13.500M5 0V13M9.500 0V13" fill="#fff" stroke="#3c424c"/><path d="M9 15V11Q9 8 12 8Q15 8 15 11V15" fill="none" stroke="#c8281e" stroke-width="2"/></svg></button>
    <button aria-label="Show constraints"><svg viewBox="0 0 16 16"><rect x=".5" y=".5" width="15" height="8" fill="#e4e8ee" stroke="#3c424c"/><path d="M5 4L7 6L11 2" fill="none" stroke="#c8281e"/><circle cx="13" cy="9" r="3" fill="#8ec4f4" stroke="#3c78b8"/><path d="M13 12V16" stroke="#777" stroke-width="2"/></svg></button>
    <button class="menu" aria-label="Dimension display"><svg viewBox="0 0 16 16"><path d="M1 3H6M3.500 .5V5.500M8 6L10 0M11 3H15M.5 8V15M15.500 8V15M1 11.500H15" stroke="#3c424c"/><path d="M1 11.500L4 9.500V13.500ZM15 11.500L12 9.500V13.500Z" fill="#3c424c"/></svg></button>
    <button aria-label="Slice graphics"><svg viewBox="0 0 16 16"><path d="M1 8L4 6H10V14H1Z" fill="#dfe6ee" stroke="#3c424c"/><path d="M9 5L15 1V12L9 16Z" fill="#a4c8ec" stroke="#1d5ea8"/></svg></button>
    <button aria-label="Show degrees of freedom"><svg viewBox="0 0 16 16"><path d="M5 0V10M0 5H10M3 2L5 0L7 2M3 8L5 10L7 8M2 3L0 5L2 7M8 3L10 5L8 7" fill="none" stroke="#222"/><circle cx="11.500" cy="10" r="3" fill="#ffc44c" stroke="#e08010"/><path d="M11.500 13V16" stroke="#777" stroke-width="2"/></svg></button>
    <button aria-label="Relax mode"><svg viewBox="0 0 16 16"><path d="M2 5L14 15" stroke="#d82020"/><path d="M11 0V9M6.500 4.500H15.500M9 2L11 0L13 2M9 7L11 9L13 7" fill="none" stroke="#3c424c"/><rect x="0" y="3" width="3" height="3" fill="#fff" stroke="#d82020"/><rect x="12" y="13" width="3" height="3" fill="#fff" stroke="#d82020"/></svg></button>
  </div>
  <span class="coords">0,000 mm, 0,000 mm</span><span class="dims">40 dimensions needed</span><span class="docs">1</span><span class="open">3</span>
</footer>
</body>
</html>
```
FILE: styles.css
```css
* { box-sizing: border-box; }
html, body { height: 100%; }
body {
  margin: 0; position: relative; overflow: hidden;
  display: grid; grid-template-rows: 18px 20px 95px minmax(0, 1fr) 20px;
  grid-template-columns: minmax(0, 1fr);
  font: 12px/15px "Open Sans", "Noto Sans", sans-serif; color: #444; background: #f0f0f0;
}
button, select, input { font: inherit; color: inherit; margin: 0; padding: 0; border: 0; background: none; }
a { color: inherit; text-decoration: none; }
h1, h2, p, ul { margin: 0; padding: 0; font: inherit; }
svg { display: block; overflow: visible; flex: none; }
.defs { position: absolute; width: 0; height: 0; }

/* title bar */
.titlebar {
  display: flex; align-items: center; padding: 0 0 4px 43px; height: 18px; overflow: hidden;
  background: linear-gradient(#8e8e8e, #565656); color: #000; white-space: nowrap;
}
.titlebar > * { flex: none; }
.tool { width: 24px; height: 16px; display: flex; justify-content: center; align-items: center; }
.tool svg { width: 16px; height: 16px; }
.drop { width: 12px; height: 14px; display: flex; align-items: center; justify-content: center; }
.drop::before { content: ""; border: 3px solid transparent; border-top-color: #333; margin-top: 4px; border-bottom: 0; }
.drop.wide { width: 19px; }
.rule { width: 8px; height: 18px; border-left: 1px solid #999; }
.rule.far { margin-left: 5px; }
.titlebar .fx { height: 18px; margin-bottom: -4px; font: italic 15px/18px "Liberation Serif", serif; color: #111; }
.fx span { font-size: 12px; }
.pick { position: relative; width: 98px; height: 18px; }
.titlebar .pick { display: flex; align-items: center; background: linear-gradient(#eaeaea, #cfcfcf); margin-bottom: -4px; padding: 0 4px 4px; }
.titlebar .pick::after { content: ""; border: 4px solid transparent; border-top-color: #333; border-bottom: 0; }
.pick select { appearance: none; flex: 1; width: 60px; line-height: 14px; }
.pick svg { width: 14px; height: 14px; margin-right: 3px; }
.material select { font-style: italic; color: #888; }
.titlebar .caption {
  flex: 1; height: 18px; margin-bottom: -4px; display: flex; justify-content: center; gap: 12px;
  font: 12px/15px Roboto, "Open Sans", sans-serif; padding-left: 10px;
  background: linear-gradient(90deg, #8aa9cf, #b4cbe8 20%, #a4c0e6 60%, #7fa6d8); border-bottom: 1px solid #dfe9f4;
}
.expand { width: 14px; }
.expand::before { content: ""; display: inline-block; border: 4px solid transparent; border-left-color: #222; border-right: 0; }
.search { width: 180px; height: 18px; background: #f0f0f0; margin-bottom: -4px; padding: 0 5px 4px; }
.search::placeholder { color: #8a8a8a; opacity: 1; }
.signin { width: 82px; text-align: left; padding-left: 1px; }
.winbar { width: 144px; height: 18px; margin-bottom: -4px; background: linear-gradient(#86a8d6, #a9c4e6); border-bottom: 1px solid #dfe9f4; display: flex; }
.win { height: 13px; border: 1px solid #48566c; border-top: 0; box-shadow: inset 0 -1px #dde6f2; display: flex; justify-content: center; background: linear-gradient(#7f9cc4, #9db6d8); }
.win svg { width: 18px; height: 12px; }
.resize { width: 27px; border-radius: 0 0 5px 5px; margin-right: 14px; }
.min { width: 29px; border-radius: 0 0 0 5px; }
.max { width: 27px; }
.close { width: 46px; border-radius: 0 0 5px 0; background: linear-gradient(#d0543c, #b83420); }

.appmenu { position: absolute; left: 0; top: 0; width: 38px; height: 36px; background: linear-gradient(#b4b4b4, #6a6a6a); border: 1px solid #222; border-top: 0; border-left: 0; }
.appmenu svg { width: 26px; height: 24px; }
.appmenu span { display: block; width: 32px; color: #111; font-size: 9px; line-height: 10px; font-weight: 600; }
.appmenu::after { content: ""; position: absolute; right: 3px; top: 13px; border: 3px solid transparent; border-top: 4px solid #333; border-bottom: 0; }

/* ribbon tabs */
.tabs {
  display: grid; grid-template-columns: 74px 52px 59px 49px 63px 45px 93px 41px 78px 47px 99px 60px; padding-left: 39px;
  background: #404040; color: #fff; border-bottom: 1px solid #58b018; border-top: 1px solid #585858; text-align: center; white-space: nowrap;
}
.tabs a { line-height: 18px; }
.tabs .on { background: linear-gradient(#bcd8b0, #e4f4dc); border: 1px solid #66e01c; border-bottom: 0; color: #333; line-height: 17px; margin-bottom: -1px; }
.fold { display: flex; align-items: center; padding-left: 22px; }
.fold svg { width: 26px; height: 8px; }

/* ribbon */
.ribbon { display: flex; background: linear-gradient(#d2e7c9, #8e8e8e); border-bottom: 2px solid #6c7882; }
.panel { flex: none; display: flex; flex-direction: column; background: #fff; border-right: 1px solid #999; border-left: 1px solid #d8e8d0; }
.panel .body { display: flex; height: 75px; padding-top: 2px; }
.panel h2 { height: 18px; line-height: 17px; text-align: center; background: linear-gradient(#d0e4c6, #e4f6da); }
h2.more::after, .title::after { content: ""; display: inline-block; border: 4px solid transparent; border-top: 5px solid #333; border-bottom: 0; margin-left: 6px; vertical-align: 1px; }
.p-sketch { width: 76px; border-left: 0; }
.p-sketch h2 { padding-right: 4px; }
.p-create { width: 369px; }
.p-modify { width: 203px; }
.p-pattern { width: 99px; }
.p-constrain { width: 200px; }
.p-insert { width: 69px; }
.p-format { width: 106px; }
.p-exit { width: 46px; }
.p-exit h2 { background: linear-gradient(#c4e2d8, #dcf8f0); }
.p-format .body { flex-wrap: wrap; align-content: flex-start; padding-left: 1px; }
.big { position: relative; display: flex; flex-direction: column; align-items: center; gap: 4px; width: 47px; padding-top: 2px; white-space: nowrap; }
.big svg { width: 32px; height: 32px; }
.big::after { content: ""; border: 3px solid transparent; border-top-color: #333; border-bottom: 0; margin-top: -1px; }
.side::after { position: absolute; right: 5px; top: 53px; }
.plain::after { display: none; }
.p-sketch .big { width: 72px; }
.p-sketch .big::after { right: 2px; }
.p-create .big:nth-child(3) { width: 44px; }
.p-create .big:nth-child(4) { width: 70px; }
.p-create .stack { width: 76px; border-right: 1px solid #ccc; height: 72px; padding-left: 1px; }
.p-create .split { width: 83px; }
.p-constrain .big { width: 64px; }
.p-exit .big { width: 44px; }
.stack { display: grid; grid-template-rows: repeat(3, 24px); width: 66px; align-items: center; justify-items: start; }
.p-pattern .stack, .p-insert .stack { width: 96px; padding-left: 1px; }
.p-insert .stack { width: 66px; }
.small { height: 22px; display: flex; align-items: center; gap: 3px; padding: 0 2px 0 1px; border: 1px solid transparent; white-space: nowrap; }
.small svg { width: 16px; height: 16px; margin: 0 2px; }
.small.on { background: #b4d2f2; border-color: #2a6cc0; padding-right: 4px; }
.glyph { width: 20px; text-align: center; font-size: 16px; font-weight: 800; }
.small.more::after { content: ""; border: 3px solid transparent; border-top-color: #333; border-bottom: 0; margin-left: 5px; }
.cells { display: grid; grid-auto-rows: 22px; row-gap: 2px; padding-top: 1px; align-content: start; }
.cells button { border: 1px solid #ccc; background: linear-gradient(#fff, #ececec); margin-right: -1px; display: flex; align-items: center; justify-content: center; }
.cells svg { width: 16px; height: 16px; }
.cells .on { background: #b4d2f2; border-color: #2a6cc0; }
.one { grid-template-columns: 23px; margin-right: 12px; }
.four { grid-template-columns: repeat(4, 24px); }
.two { grid-template-columns: 24px 24px; padding-bottom: 1px; margin: 0 48px 0 1px; }

/* model browser */
.work { display: grid; grid-template-columns: 244px minmax(0, 1fr); min-height: 0; }
.browser { display: flex; flex-direction: column; padding: 0 3px 4px 0; background: #f0f0f0; border-right: 1px solid #888; color: #000; }
.grip { display: flex; align-items: center; height: 15px; gap: 4px; padding-left: 1px; }
.grip span { width: 225px; height: 5px; border: solid #999; border-width: 1px 1px 1px 0; }
.grip svg { width: 8px; height: 8px; }
.head { display: flex; align-items: center; justify-content: space-between; height: 20px; background: #ababab; padding: 0 4px 0 8px; }
.title { color: #fff; font-weight: 700; }
.title::after { border-top-color: #fff; vertical-align: 2px; margin-left: 4px; }
.helpbox svg { width: 14px; height: 15px; }
.tools { display: flex; align-items: center; height: 28px; padding: 0 0 4px 3px; border-top: 1px solid #fff; gap: 6px; }
.tools svg { width: 16px; height: 16px; }
.tools span { height: 18px; border-left: 1px solid #999; margin-right: 3px; }
.tree { flex: 1; list-style: none; border: 1px solid #666; border-left: 0; background: #fff; font: 11px/18px Roboto, "Open Sans", sans-serif; }
.tree li { height: 18px; display: flex; align-items: center; gap: 2px; background: #eee; padding-left: 25px; position: relative; }
.tree .root { padding-left: 6px; }
.tree .pick { width: auto; background: #fff; }
.tree svg { width: 16px; height: 16px; margin: 0; }
.tree li:not(.root)::before { content: ""; position: absolute; left: 9px; top: 0; width: 12px; height: 9px; border: solid #888; border-width: 0 0 1px 1px; }
.tree li:not(.root):not(.last)::after { content: ""; position: absolute; left: 9px; top: 9px; height: 9px; border-left: 1px solid #888; }
.tree .plus:not(.root):not(.last)::after { content: "+"; left: 5px; top: 5px; width: 9px; height: 9px; border: 1px solid #666; background: #fff; font: 9px/6px "DejaVu Sans Mono", monospace; text-align: center; }

/* drawing area */
.stage { display: grid; grid-template-rows: minmax(0, 1fr) 22px; min-width: 0; }
.canvas { position: relative; overflow: hidden; background: #336395; box-shadow: inset 1px 0 #555; }
.drawing { width: 100%; height: 100%; }
.axis text { font: 12px "Open Sans", sans-serif; }
.axis .up { font-size: 10px; }
.mdi { position: absolute; right: 0; top: 5px; display: flex; gap: 5px; }
.mdi svg { width: 14px; height: 14px; }
.cube { position: absolute; right: 34px; top: 59px; width: 54px; height: 54px; border: 1px solid #6c7884; background: rgba(196, 206, 222, .6); box-shadow: 0 0 8px rgba(30, 60, 100, .5); }
.cube span { display: block; width: 34px; height: 34px; margin: 0 auto; background: rgba(110, 140, 170, .4); writing-mode: vertical-rl; text-align: center; font: 700 12px/34px "Liberation Sans", sans-serif; color: #5c7088; }
.navbar { position: absolute; right: 0; top: 144px; width: 35px; height: 233px; border: 2px solid #24507e; border-radius: 6px; background: #6c8db0; display: flex; flex-direction: column; align-items: center; padding: 2px; }
.navbar svg { width: 16px; height: 16px; }
.navbar button { height: 24px; display: flex; flex-direction: column; align-items: center; justify-content: center; flex: none; }
.navbar .tiny { height: 8px; align-self: flex-end; margin: 1px; }
.navbar .tiny svg { width: 8px; height: 8px; }
.navbar .menu { height: 34px; justify-content: flex-start; gap: 7px; padding-top: 4px; }
.navbar .menu::after { content: ""; border: 3px solid transparent; border-top-color: #3e566f; border-bottom: 0; }
.navbar .wheelbtn { height: 46px; padding-top: 10px; gap: 10px; }
.navbar .wheelbtn svg { width: 22px; height: 22px; }
.navbar hr { width: 26px; margin: 2px 0; border: 0; border-top: 1px solid #4a6888; flex: none; }

/* document tabs */
.docbar { display: flex; background: linear-gradient(#dcdcdc, #b2b2b2); border-top: 2px solid #fff; box-shadow: inset 0 1px #666; color: #222; padding-top: 1px; }
.lay { width: 20px; border: 1px solid #333; background: linear-gradient(#fff, #d4d6da); display: flex; justify-content: center; }
.lay svg { width: 16px; height: 16px; }
.docbar a { height: 18px; line-height: 18px; text-align: center; background: #c8c8c8; border: 1px solid #555; border-top: 0; border-radius: 0 0 5px 5px; white-space: nowrap; }
.docbar .on { background: #fff; }
.d1 { width: 71px; } .d2 { width: 47px; } .d3 { width: 63px; } .d4 { width: 59px; }
.docbar a svg { display: inline-block; width: 7px; height: 7px; margin-left: 7px; vertical-align: 3px; }

/* status bar */
.status { display: flex; background: linear-gradient(#fff, #c8c8c8); color: #000; white-space: nowrap; overflow: hidden; font: 12px/15px Roboto, "Open Sans", sans-serif; }
.status > * { border-left: 1px solid #ccc; padding-top: 4px; flex: none; margin-top: 1px; }
.status .prompt { flex: 0 0 446px; border: 0; }
.status .aids { flex: 1; display: flex; gap: 8px; padding: 3px 0 0 6px; }
.aids svg { width: 16px; height: 16px; }
.aids .menu { display: flex; align-items: center; gap: 4px; margin-right: 4px; }
.aids .menu::after { content: ""; border: 3px solid transparent; border-top-color: #333; border-bottom: 0; }
.coords { width: 118px; padding-left: 4px; }
.dims { width: 126px; padding-left: 4px; }
.docs { width: 38px; padding-left: 6px; }
.open { width: 36px; padding-left: 6px; }
```
